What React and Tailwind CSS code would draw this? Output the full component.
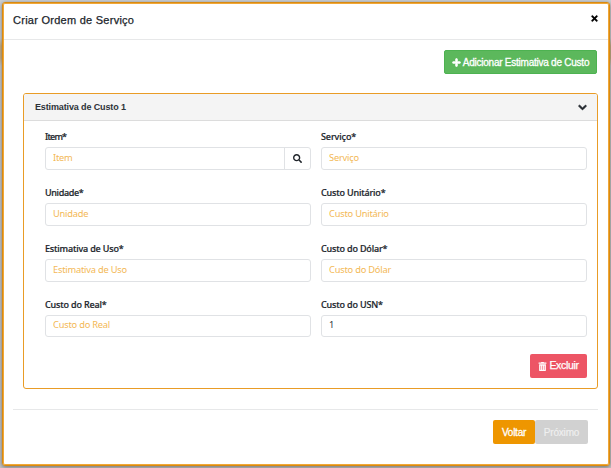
import { FaPlus, FaTimes, FaChevronDown, FaSearch, FaTrashAlt } from "react-icons/fa";

function Label({ children, spacing = "tracking-[-0.17px]" }) {
  return (
    <span className={`block h-[20px] whitespace-nowrap pt-[4px] font-['Noto_Sans',sans-serif] text-[9px] font-medium leading-[12px] text-[#20252b] [-webkit-text-stroke:0.2px_#20252b] ${spacing}`}>
      {children}
    </span>
  );
}

function Field({ label, placeholder, value, search, labelSpacing, short }) {
  return (
    <label className="block h-[56px] w-[266px]">
      <Label spacing={labelSpacing}>{label}</Label>
      <span className={`flex overflow-hidden rounded-[3px] border border-[#e0e2e5] ${short ? "h-[22px]" : "h-[23px]"}`}>
        <input
          className="min-w-0 flex-1 px-[7px] pb-[2px] font-['Noto_Sans',sans-serif] text-[9.3px] leading-[12px] tracking-[-0.22px] text-[#343a40] outline-none placeholder:text-[#f3b855] placeholder:opacity-100"
          placeholder={placeholder}
          defaultValue={value}
        />
        {search && (
          <button type="button" className="flex w-[26px] items-center justify-center border-l border-[#e0e2e5] text-[#20252b]">
            <FaSearch className="size-[9px]" />
          </button>
        )}
      </span>
    </label>
  );
}

export default function App() {
  return (
    <div className="h-[468px] w-[611px] overflow-hidden bg-[linear-gradient(to_bottom,#cdd0d3_0px,#cdd0d3_38px,#cbb288_46px,#cbb288_58px,#c9cacb_66px,#c4c4c4_100%)] pl-[2px] pt-[2px] font-['Liberation_Sans',Arial,sans-serif]">
      <section className="flex h-[464px] w-[608px] flex-col rounded-[3px] border border-[#d98a10] bg-white p-px shadow-[inset_0_0_0_1px_#f0a738,0_1px_4px_rgba(0,0,0,0.45)]">
        <header className="flex h-[36px] shrink-0 items-center justify-between border-b border-[#e7e8e9] pl-[9px] pr-[9px]">
          <h1 className="whitespace-nowrap pb-[3px] text-[11px] font-normal tracking-[0.26px] text-[#20252b] [-webkit-text-stroke:0.25px_#20252b]">
            Criar Ordem de Serviço
          </h1>
          <button type="button" className="pb-[7px]">
            <FaTimes className="size-[9px] text-black [stroke-width:20] [stroke:black]" />
          </button>
        </header>

        <div className="flex h-[53px] shrink-0 items-start justify-end pr-[11px] pt-[10px]">
          <button type="button" className="flex h-[24px] w-[153px] items-center justify-center gap-[2px] whitespace-nowrap rounded-[2px] border border-[#4db251] bg-[#5cb85c] text-[10px] tracking-[-0.24px] text-white [-webkit-text-stroke:0.3px_white]">
            <FaPlus className="size-[9px] shrink-0 [stroke-width:45] [stroke:white]" />
            Adicionar Estimativa de Custo
          </button>
        </div>

        <div className="ml-[19px] h-[296px] w-[575px] shrink-0 rounded-[3px] border border-[#e99c26]">
          <div className="flex h-[27px] items-center justify-between rounded-t-[2px] border-b border-[#dcdcdc] bg-[#f4f4f4] pl-[11px] pr-[10px]">
            <h2 className="whitespace-nowrap pt-px text-[9px] font-bold tracking-[-0.13px] text-[#2d3238]">Estimativa de Custo 1</h2>
            <FaChevronDown className="mt-px size-[9px] text-[#20252b] [stroke-width:50] [stroke:#20252b]" />
          </div>
          <div className="ml-[21px] mt-[6px] grid w-[542px] grid-cols-[266px_266px] gap-x-[10px]">
            <Field label="Item*" placeholder="Item" labelSpacing="tracking-[-0.8px]" search />
            <Field label="Serviço*" placeholder="Serviço" labelSpacing="tracking-[-0.1px]" />
            <Field label="Unidade*" placeholder="Unidade" labelSpacing="tracking-[-0.35px]" />
            <Field label="Custo Unitário*" placeholder="Custo Unitário" />
            <Field label="Estimativa de Uso*" placeholder="Estimativa de Uso" />
            <Field label="Custo do Dólar*" placeholder="Custo do Dólar" />
            <Field label="Custo do Real*" placeholder="Custo do Real" short />
            <Field label="Custo do USN*" value="1" short />
          </div>
          <div className="flex justify-end pr-[10px] pt-[3px]">
            <button type="button" className="flex h-[24px] w-[57px] items-center justify-center gap-[2px] rounded-[2px] bg-[#ed5565] text-[10.5px] tracking-[-0.35px] text-white [-webkit-text-stroke:0.25px_white]">
              <FaTrashAlt className="size-[9px]" />
              Excluir
            </button>
          </div>
        </div>

        <footer className="ml-[9px] mt-[20px] flex w-[585px] justify-end border-t border-[#e7e8e9] pr-[10px] pt-[10px]">
          <button type="button" className="h-[24px] w-[42px] rounded-[2px] bg-[#ee9600] text-[10px] tracking-[-0.25px] text-white [-webkit-text-stroke:0.3px_white]">Voltar</button>
          <button type="button" disabled className="h-[24px] w-[53px] rounded-[2px] bg-[#d1d1d1] text-[10px] tracking-[-0.2px] text-[#efefef] [-webkit-text-stroke:0.2px_#efefef]">Próximo</button>
        </footer>
      </section>
    </div>
  );
}
